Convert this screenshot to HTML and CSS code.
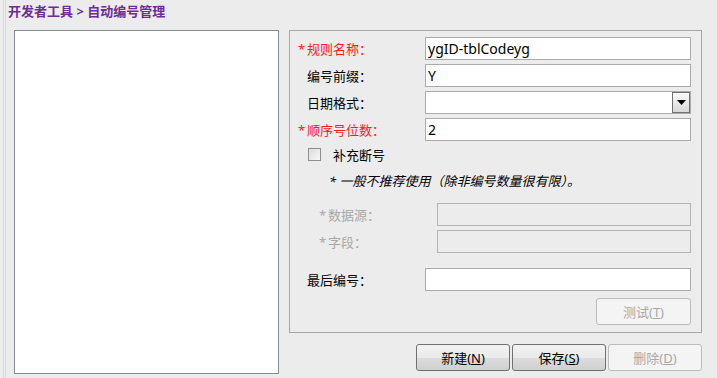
FILE: index.html
```html
<!DOCTYPE html>
<html lang="zh-CN">
<head>
    <meta charset="UTF-8">
    <title>自动编号管理</title>
    <link rel="stylesheet" href="styles.css">
</head>
<body>
    <div class="frame">
        <div class="title">开发者工具 &gt; 自动编号管理</div>
        <div class="main">
            <div class="rule-list"></div>

            <div class="side">
                <div class="group">
                    <div class="row">
                        <label class="req"><span class="star">*</span>规则名称：</label>
                        <div class="field"><input type="text" value="ygID-tblCodeyg"></div>
                    </div>
                    <div class="row">
                        <label>编号前缀：</label>
                        <div class="field"><input type="text" value="Y"></div>
                    </div>
                    <div class="row">
                        <label>日期格式：</label>
                        <div class="field combo">
                            <span class="combo-text"></span>
                            <span class="combo-btn"><svg width="9" height="5" viewBox="0 0 9 5"><path d="M0 0H9L4.5 5Z" fill="#000"/></svg></span>
                        </div>
                    </div>
                    <div class="row">
                        <label class="req"><span class="star">*</span>顺序号位数：</label>
                        <div class="field"><input type="text" value="2"></div>
                    </div>

                    <div class="check-row">
                        <span class="checkbox"></span>
                        <span>补充断号</span>
                    </div>
                    <div class="note">* 一般不推荐使用（除非编号数量很有限）。</div>

                    <div class="row sub">
                        <label class="off"><span class="star">*</span>数据源：</label>
                        <div class="field disabled"></div>
                    </div>
                    <div class="row sub">
                        <label class="off"><span class="star">*</span>字段：</label>
                        <div class="field disabled"></div>
                    </div>

                    <div class="row last">
                        <label>最后编号：</label>
                        <div class="field"><input type="text" value=""></div>
                    </div>

                    <div class="test-row">
                        <button class="btn" disabled>测试(<u>T</u>)</button>
                    </div>
                </div>

                <div class="actions">
                    <button class="btn">新建(<u>N</u>)</button>
                    <button class="btn">保存(<u>S</u>)</button>
                    <button class="btn" disabled>删除(<u>D</u>)</button>
                </div>
            </div>
        </div>
    </div>
</body>
</html>
```

FILE: styles.css
```css
/* General */
:root {
    --bg-color: #ececec;
    --title-color: #6b2d96;
    --label-color: #000;
    --required-color: #ff1a1a;
    --disabled-text: #a8a8a8;
    --input-border: #ababab;
    --font: "Noto Sans", "Noto Sans CJK SC", sans-serif;
}

html, body {
    margin: 0;
    height: 100%;
}

body {
    background-color: var(--bg-color);
    font-family: var(--font);
    font-size: 13px;
    color: var(--label-color);
    overflow: hidden;
}

.frame {
    margin-left: 3px;
    height: 100%;
    border-left: 1px solid #dadada;
    padding-left: 1px;
    box-sizing: border-box;
}

.title {
    border-left: 1px solid #dadada;
    padding: 2px 0 0 2px;
    height: 28px;
    box-sizing: border-box;
    font-weight: bold;
    font-size: 13px;
    line-height: 18px;
    color: var(--title-color);
}

.main {
    display: flex;
    border-left: 1px solid #dadada;
    padding-left: 8px;
    padding-top: 2px;
    height: calc(100% - 28px);
    box-sizing: border-box;
}

.rule-list {
    width: 265px;
    height: 344px;
    background: #fff;
    border: 1px solid #878c94;
    box-sizing: border-box;
}

.side {
    margin-left: 10px;
    width: 413px;
}

/* Group box */
.group {
    border: 1px solid #a6a6a6;
    height: 303px;
    box-sizing: border-box;
    padding: 6px 10px 0 8px;
}

.row {
    display: flex;
    align-items: center;
    height: 23px;
    margin-bottom: 4px;
}

.row label {
    width: 127px;
    padding-left: 9px;
    box-sizing: border-box;
    white-space: nowrap;
}

.row label.req {
    padding-left: 0;
    color: var(--required-color);
}

.star {
    display: inline-block;
    width: 9px;
}

.field {
    flex: 1;
    height: 23px;
    border: 1px solid var(--input-border);
    background: #fff;
    box-sizing: border-box;
    display: flex;
}

.field input {
    border: none;
    outline: none;
    width: 100%;
    padding: 0 2px;
    font-family: var(--font);
    font-size: 14px;
    background: transparent;
}

.combo {
    justify-content: space-between;
}

.combo-btn {
    width: 18px;
    height: 21px;
    border: 1px solid #707070;
    box-sizing: border-box;
    background: linear-gradient(#fafafa, #d8d8d8);
    display: flex;
    align-items: center;
    justify-content: center;
}

.check-row {
    display: flex;
    align-items: center;
    gap: 12px;
    margin: 4px 0 0 10px;
    height: 18px;
}

.checkbox {
    width: 11px;
    height: 11px;
    border: 1px solid #8f8f8f;
    background: linear-gradient(135deg, #dcdcdc, #f8f8f8);
}

.note {
    margin: 8px 0 0 31px;
    font-style: italic;
    height: 20px;
    line-height: 20px;
}

.note + .row.sub {
    margin-top: 12px;
}

.row.sub label {
    width: 139px;
    padding-left: 21px;
}

.row label.off {
    color: var(--disabled-text);
}

.field.disabled {
    background: var(--bg-color);
    border-color: #b4b4b4;
}

.row.last {
    margin-top: 15px;
}

.test-row {
    display: flex;
    justify-content: flex-end;
    margin-top: 7px;
}

/* Buttons */
.btn {
    width: 95px;
    height: 27px;
    font-family: var(--font);
    font-size: 13px;
    color: #000;
    border: 1px solid #707070;
    border-radius: 3px;
    background: linear-gradient(#f2f2f2 0%, #ebebeb 50%, #dddddd 51%, #cfcfcf 100%);
    padding: 0;
}

.btn:disabled {
    color: var(--disabled-text);
    border-color: #bcbcbc;
    background: #f4f4f4;
}

.actions {
    display: flex;
    justify-content: flex-end;
    gap: 2px;
    margin-top: 11px;
}

.actions .btn {
    width: 94px;
}
```
